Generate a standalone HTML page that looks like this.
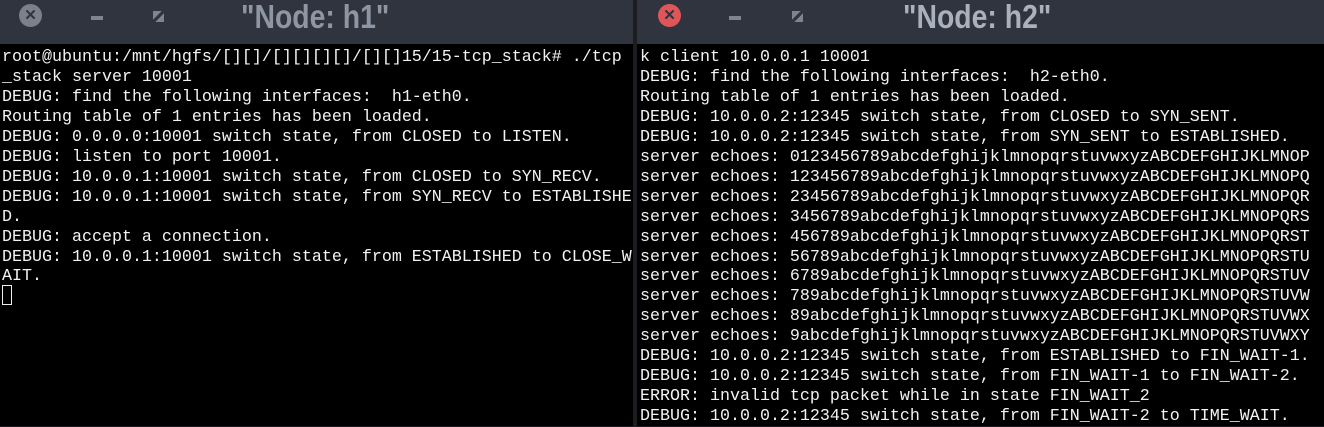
<!DOCTYPE html>
<html><head><meta charset="utf-8"><style>
*{margin:0;padding:0;box-sizing:border-box}
body{width:1324px;height:426px;background:#1b1d20;overflow:hidden;position:relative;font-family:"Liberation Mono","Noto Sans CJK SC",monospace}
.win{position:absolute;top:0;height:426px;background:#000}
.tb{position:absolute;left:0;top:0;right:0;height:44px;background:#2f343f}
.title{position:absolute;top:-2px;font-family:"Liberation Sans",sans-serif;font-weight:bold;font-size:33px;transform:scaleX(0.86);transform-origin:left top;color:#8e96a3;white-space:nowrap}
.cl{position:absolute;top:4px;width:23px;height:23px;border-radius:50%;color:#2f343f;font:bold 15px "Liberation Sans",sans-serif;text-align:center;line-height:23px}
.mn{position:absolute;top:16px;width:12px;height:4px;background:#7d8592}
.mx{position:absolute;top:11px;width:11px;height:11px;background:linear-gradient(135deg,#7d8592 0 40%,transparent 40% 60%,#7d8592 60%)}
pre{position:absolute;top:48px;font-family:"Liberation Mono",monospace;font-size:16.67px;line-height:19.95px;color:#f2f2f2;white-space:pre}
</style></head><body>
<div class="win" style="left:0;width:633px">
 <div class="tb">
  <div class="cl" style="left:19px;background:#7b818b">✕</div>
  <div class="mn" style="left:91px"></div>
  <div class="mx" style="left:153px"></div>
  <div class="title" style="left:241px">"Node: h1"</div>
 </div>
<pre style="left:2px">root@ubuntu:/mnt/hgfs/[][]/[][][][]/[][]15/15-tcp_stack# ./tcp
_stack server 10001
DEBUG: find the following interfaces:  h1-eth0.
Routing table of 1 entries has been loaded.
DEBUG: 0.0.0.0:10001 switch state, from CLOSED to LISTEN.
DEBUG: listen to port 10001.
DEBUG: 10.0.0.1:10001 switch state, from CLOSED to SYN_RECV.
DEBUG: 10.0.0.1:10001 switch state, from SYN_RECV to ESTABLISHE
D.
DEBUG: accept a connection.
DEBUG: 10.0.0.1:10001 switch state, from ESTABLISHED to CLOSE_W
AIT.
</pre>
 <div style="position:absolute;left:2px;top:285px;width:10px;height:20px;border:1px solid #eee"></div>
</div>
<div class="win" style="left:637px;width:687px">
 <div class="tb">
  <div class="cl" style="left:21px;background:#e05558">✕</div>
  <div class="mn" style="left:92px"></div>
  <div class="mx" style="left:155px"></div>
  <div class="title" style="left:266px;color:#a9b1bd">"Node: h2"</div>
 </div>
<pre style="left:3px">k client 10.0.0.1 10001
DEBUG: find the following interfaces:  h2-eth0.
Routing table of 1 entries has been loaded.
DEBUG: 10.0.0.2:12345 switch state, from CLOSED to SYN_SENT.
DEBUG: 10.0.0.2:12345 switch state, from SYN_SENT to ESTABLISHED.
server echoes: 0123456789abcdefghijklmnopqrstuvwxyzABCDEFGHIJKLMNOP
server echoes: 123456789abcdefghijklmnopqrstuvwxyzABCDEFGHIJKLMNOPQ
server echoes: 23456789abcdefghijklmnopqrstuvwxyzABCDEFGHIJKLMNOPQR
server echoes: 3456789abcdefghijklmnopqrstuvwxyzABCDEFGHIJKLMNOPQRS
server echoes: 456789abcdefghijklmnopqrstuvwxyzABCDEFGHIJKLMNOPQRST
server echoes: 56789abcdefghijklmnopqrstuvwxyzABCDEFGHIJKLMNOPQRSTU
server echoes: 6789abcdefghijklmnopqrstuvwxyzABCDEFGHIJKLMNOPQRSTUV
server echoes: 789abcdefghijklmnopqrstuvwxyzABCDEFGHIJKLMNOPQRSTUVW
server echoes: 89abcdefghijklmnopqrstuvwxyzABCDEFGHIJKLMNOPQRSTUVWX
server echoes: 9abcdefghijklmnopqrstuvwxyzABCDEFGHIJKLMNOPQRSTUVWXY
DEBUG: 10.0.0.2:12345 switch state, from ESTABLISHED to FIN_WAIT-1.
DEBUG: 10.0.0.2:12345 switch state, from FIN_WAIT-1 to FIN_WAIT-2.
ERROR: invalid tcp packet while in state FIN_WAIT_2
DEBUG: 10.0.0.2:12345 switch state, from FIN_WAIT-2 to TIME_WAIT.
</pre>
</div>
</body></html>
